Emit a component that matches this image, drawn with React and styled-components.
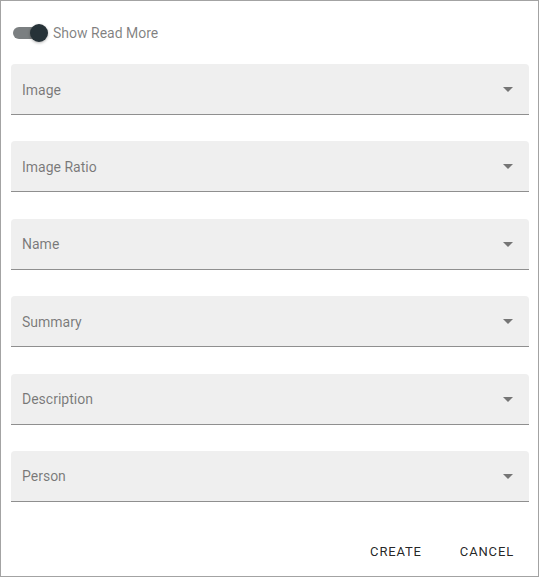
import React from "react";
import styled, { createGlobalStyle } from "styled-components";

const Global = createGlobalStyle`
  html, body { margin: 0; padding: 0; background: #fff; }
  * { box-sizing: border-box; }
  body { font-family: Roboto, "Noto Sans", Arial, sans-serif; }
`;

const Frame = styled.div`
  width: 539px;
  height: 577px;
  border: 1px solid #a3a3a3;
  padding: 14px 9px 0 10px;
  display: flex;
  flex-direction: column;
`;

const ToggleRow = styled.label`
  display: flex;
  align-items: center;
  height: 36px;
  gap: 3px;
  color: rgba(0, 0, 0, 0.5);
  font-size: 14px;
  cursor: pointer;
`;

const Switch = styled.span`
  position: relative;
  width: 37px;
  height: 20px;
  display: inline-flex;
  align-items: center;
  margin-left: 2px;
`;

const Track = styled.span`
  display: block;
  width: 32px;
  height: 12px;
  border-radius: 6px;
  background: #7b7f81;
`;

const Thumb = styled.span`
  position: absolute;
  left: 17px;
  top: 1px;
  width: 18px;
  height: 18px;
  border-radius: 50%;
  background: #263238;
  box-shadow: 0 1px 3px rgba(0, 0, 0, 0.3);
`;

const Fields = styled.div`
  display: flex;
  flex-direction: column;
  gap: 26.4px;
  margin-top: 13px;
`;

const Field = styled.div`
  height: 51px;
  background: #efefef;
  border-radius: 4px 4px 0 0;
  border-bottom: 1px solid #8f8f8f;
  display: flex;
  align-items: center;
  padding: 1px 9px 0 11px;
  color: rgba(0, 0, 0, 0.5);
  font-size: 14px;
`;

const Label = styled.span`
  flex: 1;
`;

const Arrow = styled.svg`
  width: 24px;
  height: 24px;
  margin-top: -1px;
  fill: #757575;
`;

const Actions = styled.div`
  display: flex;
  justify-content: flex-end;
  gap: 22px;
  margin-top: auto;
  padding: 0 7px 7px 0;
`;

const Button = styled.button`
  background: none;
  border: none;
  height: 36px;
  padding: 0 8px;
  min-width: 64px;
  font-family: Roboto, Arial, sans-serif;
  font-size: 13px;
  font-weight: 400;
  letter-spacing: 0.065em;
  color: rgba(0, 0, 0, 0.87);
  cursor: pointer;
`;

const labels = ["Image", "Image Ratio", "Name", "Summary", "Description", "Person"];

export default function App() {
  return (
    <>
      <Global />
      <Frame>
        <ToggleRow>
          <Switch>
            <Track />
            <Thumb />
          </Switch>
          Show Read More
        </ToggleRow>
        <Fields>
          {labels.map((l) => (
            <Field key={l}>
              <Label>{l}</Label>
              <Arrow viewBox="0 0 24 24">
                <path d="M7 10l5 5 5-5z" />
              </Arrow>
            </Field>
          ))}
        </Fields>
        <Actions>
          <Button>CREATE</Button>
          <Button>CANCEL</Button>
        </Actions>
      </Frame>
    </>
  );
}
